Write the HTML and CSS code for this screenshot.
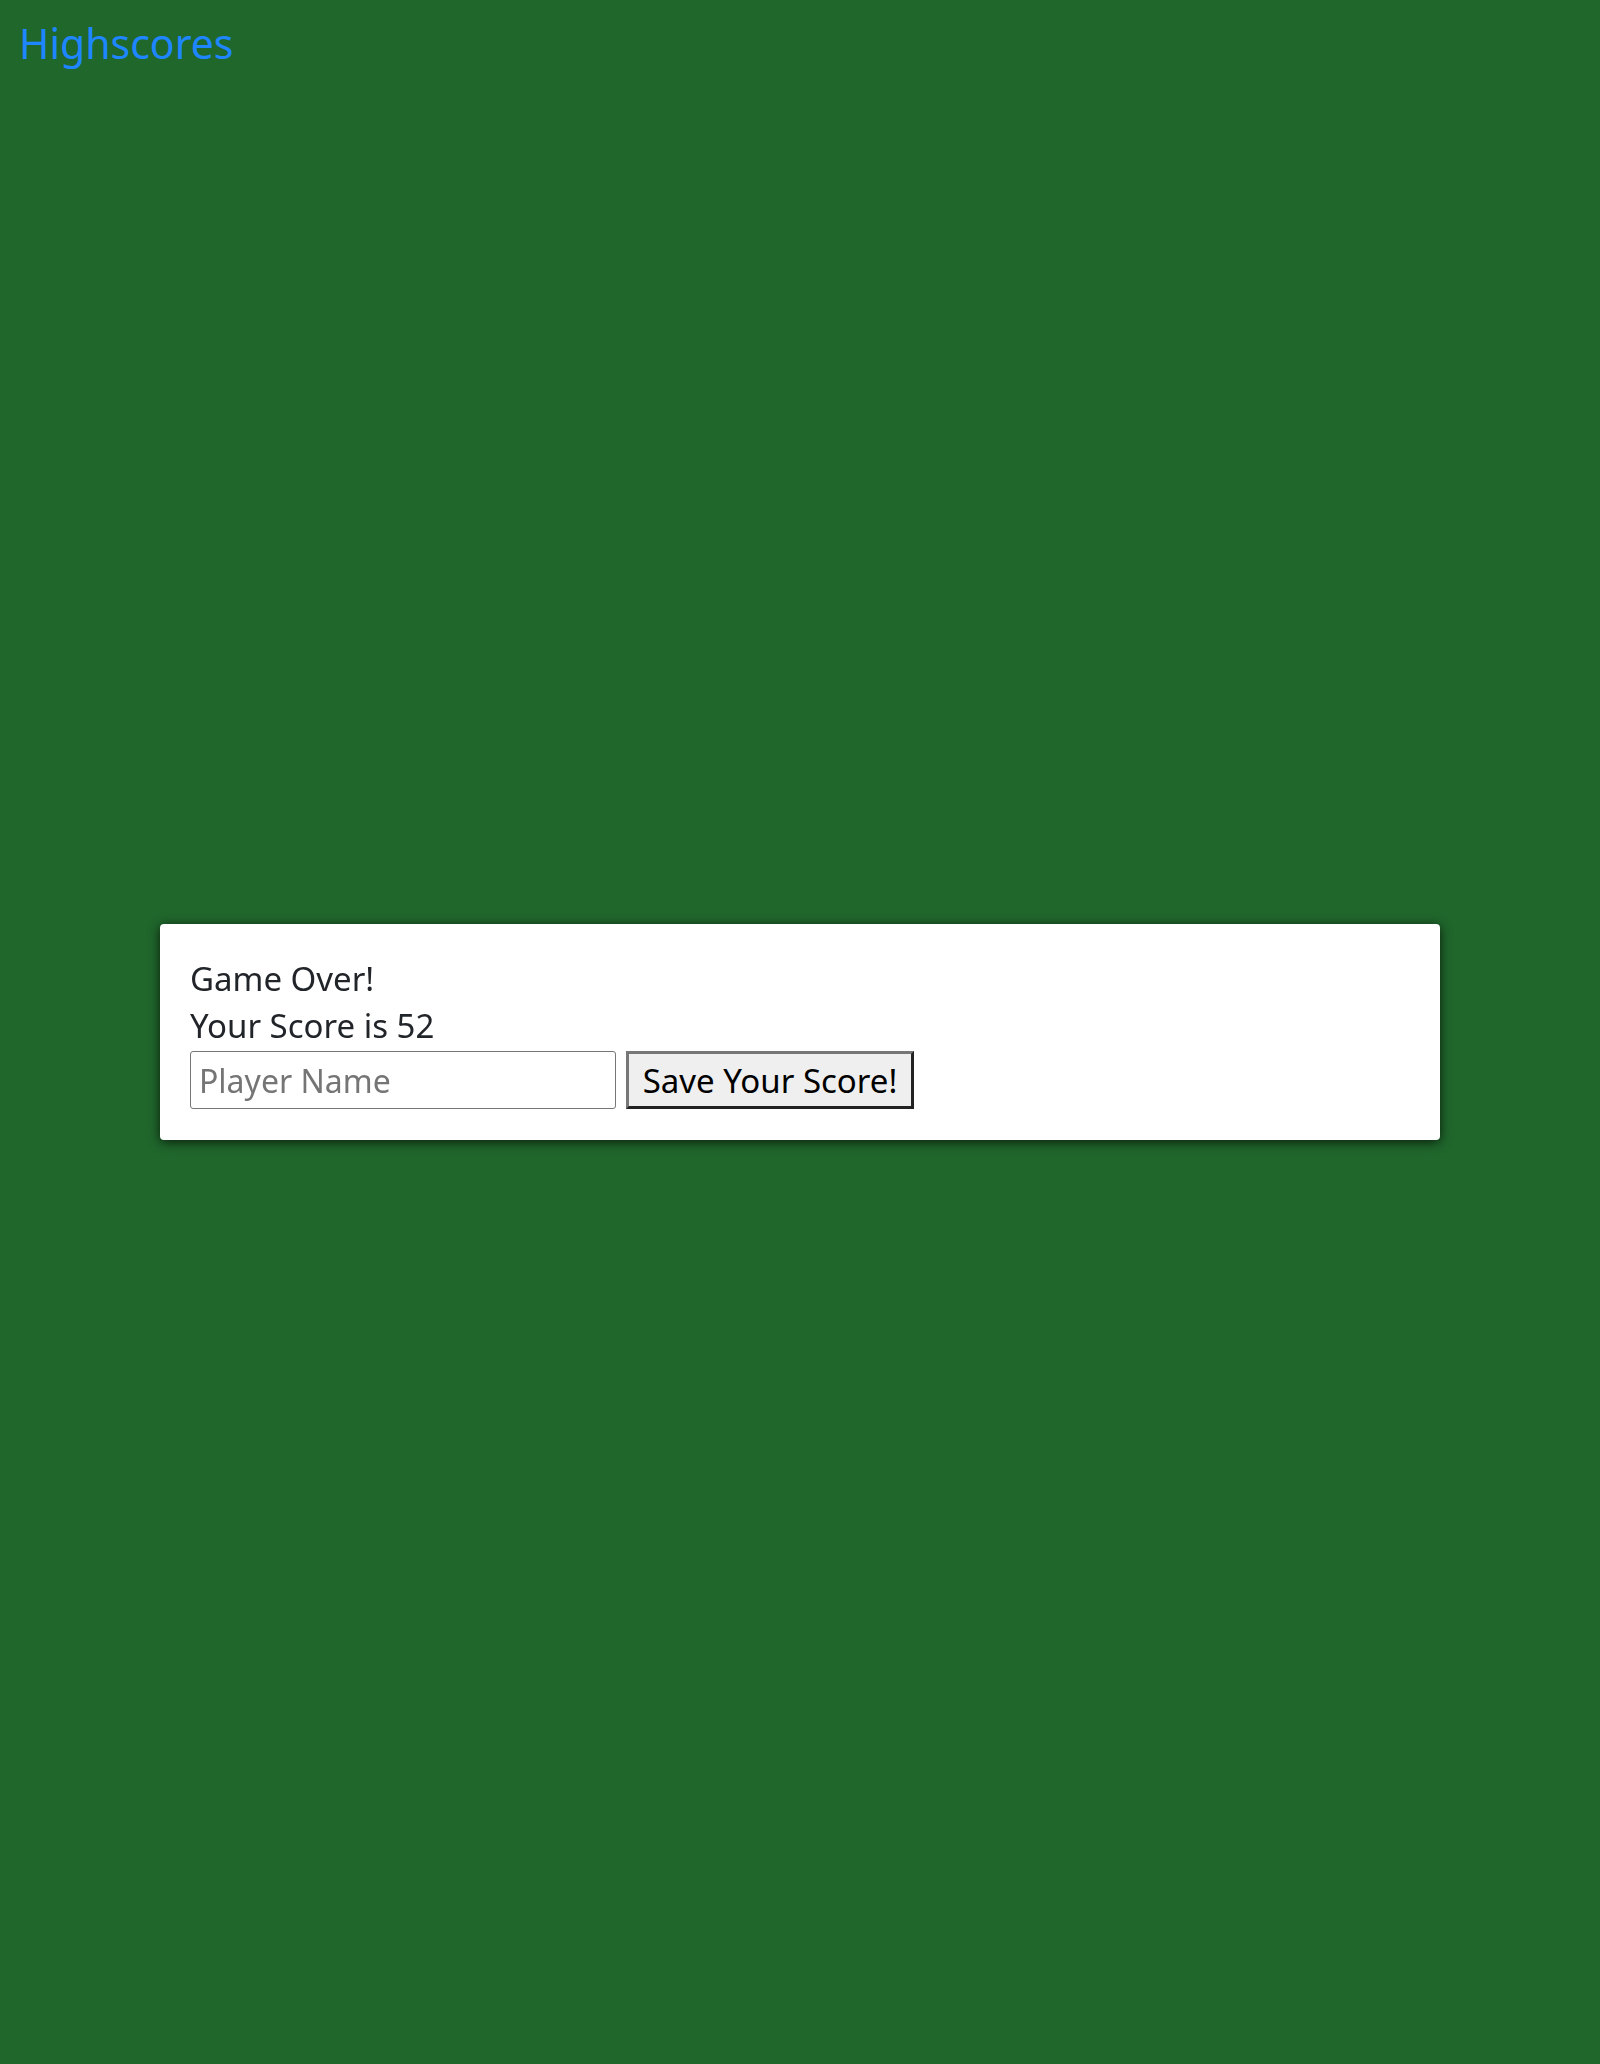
FILE: index.html
```html
<!DOCTYPE html>
<html lang="en">
<head>
<meta charset="utf-8">
<title>Game Over</title>
<link rel="stylesheet" href="styles.css">
</head>
<body>
  <header class="top">
    <a class="hs-link" href="#">Highscores</a>
  </header>
  <div class="overlay">
    <div class="modal">
      <p class="line">Game Over!</p>
      <p class="line">Your Score is 52</p>
      <form class="save-form">
        <input class="name-input" type="text" placeholder="Player Name">
        <button class="save-btn" type="button">Save Your Score!</button>
      </form>
    </div>
  </div>
</body>
</html>
```
FILE: styles.css
```css
html, body {
  margin: 0;
  padding: 0;
}
body {
  background: #20672c;
  min-height: 100vh;
  font-family: "Noto Sans", "DejaVu Sans", sans-serif;
  color: #212529;
}
.top {
  padding: 19px 0 0 19px;
  line-height: 48px;
}
.hs-link {
  font-size: 41px;
  color: #1e86ff;
  text-decoration: none;
}
.overlay {
  position: fixed;
  inset: 0;
  display: flex;
  align-items: center;
  justify-content: center;
}
.modal {
  width: 1280px;
  box-sizing: border-box;
  height: 216px;
  background: #fff;
  border-radius: 4px;
  box-shadow: 0 2px 12px rgba(0, 0, 0, 0.75);
  padding: 31px 30px 31px 30px;
}
.line {
  margin: 0;
  font-size: 33px;
  line-height: 47px;
}
.line-score {
  letter-spacing: 0.3px;
}
.save-form {
  display: flex;
  align-items: center;
  gap: 10px;
  margin-top: 2px;
}
.name-input {
  box-sizing: border-box;
  width: 426px;
  height: 58px;
  border: 1px solid #767676;
  border-radius: 3px;
  padding: 0 8px;
  font-family: "Noto Sans", "DejaVu Sans", sans-serif;
  font-size: 32px;
  color: #212529;
  background: #fff;
}
.name-input::placeholder {
  color: #757575;
}
.save-btn {
  box-sizing: border-box;
  height: 58px;
  width: 288px;
  padding: 0;
  border: 3px solid;
  border-color: #777 #222 #222 #777;
  background: #efefef;
  font-family: "Noto Sans", "DejaVu Sans", sans-serif;
  font-size: 33px;
  color: #000;
}
```
